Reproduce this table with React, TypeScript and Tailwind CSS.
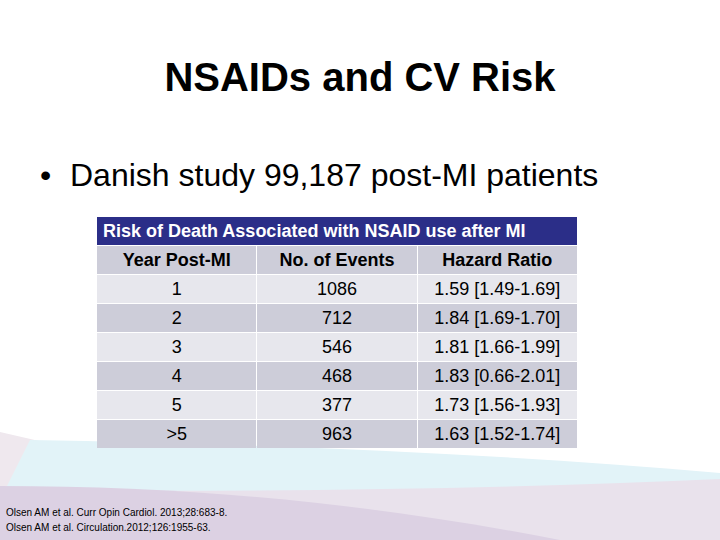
import React from 'react';

const rows = [
  { year: '1', events: '1086', hr: '1.59 [1.49-1.69]' },
  { year: '2', events: '712', hr: '1.84 [1.69-1.70]' },
  { year: '3', events: '546', hr: '1.81 [1.66-1.99]' },
  { year: '4', events: '468', hr: '1.83 [0.66-2.01]' },
  { year: '5', events: '377', hr: '1.73 [1.56-1.93]' },
  { year: '>5', events: '963', hr: '1.63 [1.52-1.74]' },
];

const Waves: React.FC = () => (
  <svg className="absolute inset-0" width="720" height="540" viewBox="0 0 720 540">
    {/* pale pink wedge on the left */}
    <path d="M0 432 L260 492 L0 500 Z" fill="#efe8ee" />
    {/* light blue band */}
    <path d="M30 440 C250 444 480 452 720 473 L720 500 L0 500 Z" fill="#e2f3f8" />
    {/* lavender band */}
    <path d="M0 490 C250 492 480 490 720 479 L720 540 L0 540 Z" fill="#e9e2ec" />
    {/* darker lavender base */}
    <path d="M0 486 C200 486 380 505 560 540 L0 540 Z" fill="#dcd1e3" />
  </svg>
);

export default function App() {
  return (
    <div
      className="relative w-[720px] h-[540px] bg-white overflow-hidden"
      style={{ fontFamily: '"Liberation Sans", Arial, sans-serif' }}
    >
      <Waves />
      <div className="relative flex flex-col h-full">
        <h1 className="mt-[53px] text-center text-[40px] leading-[48px] font-bold text-black">
          NSAIDs and CV Risk
        </h1>
        <div className="mt-[55px] flex items-center pl-[40px] text-[32px] leading-[38px] text-black">
          <span className="w-[30px]">•</span>
          <span>Danish study 99,187 post-MI patients</span>
        </div>
        <div className="ml-[97px] mt-[23px] w-[480px] flex flex-col gap-[1px] text-[18px] text-black">
          <div className="h-[28px] bg-[#2b2e88] text-white font-bold flex items-center pl-[6px]">
            Risk of Death Associated with NSAID use after MI
          </div>
          <div className="grid grid-cols-3 gap-[1px] h-[28px] font-bold">
            <div className="bg-[#cdcdd9] flex items-center justify-center">Year Post-MI</div>
            <div className="bg-[#cdcdd9] flex items-center justify-center">No. of Events</div>
            <div className="bg-[#cdcdd9] flex items-center justify-center">Hazard Ratio</div>
          </div>
          {rows.map((r, i) => {
            const bg = i % 2 === 0 ? 'bg-[#e7e7ed]' : 'bg-[#cdcdd9]';
            return (
              <div key={i} className="grid grid-cols-3 gap-[1px] h-[28px]">
                <div className={`${bg} flex items-center justify-center`}>{r.year}</div>
                <div className={`${bg} flex items-center justify-center`}>{r.events}</div>
                <div className={`${bg} flex items-center justify-center`}>{r.hr}</div>
              </div>
            );
          })}
        </div>
        <div className="mt-auto mb-[5px] pl-[6px] text-[10px] leading-[15px] text-black">
          <div>Olsen AM et al. Curr Opin Cardiol. 2013;28:683-8.</div>
          <div>Olsen AM et al. Circulation.2012;126:1955-63.</div>
        </div>
      </div>
    </div>
  );
}
